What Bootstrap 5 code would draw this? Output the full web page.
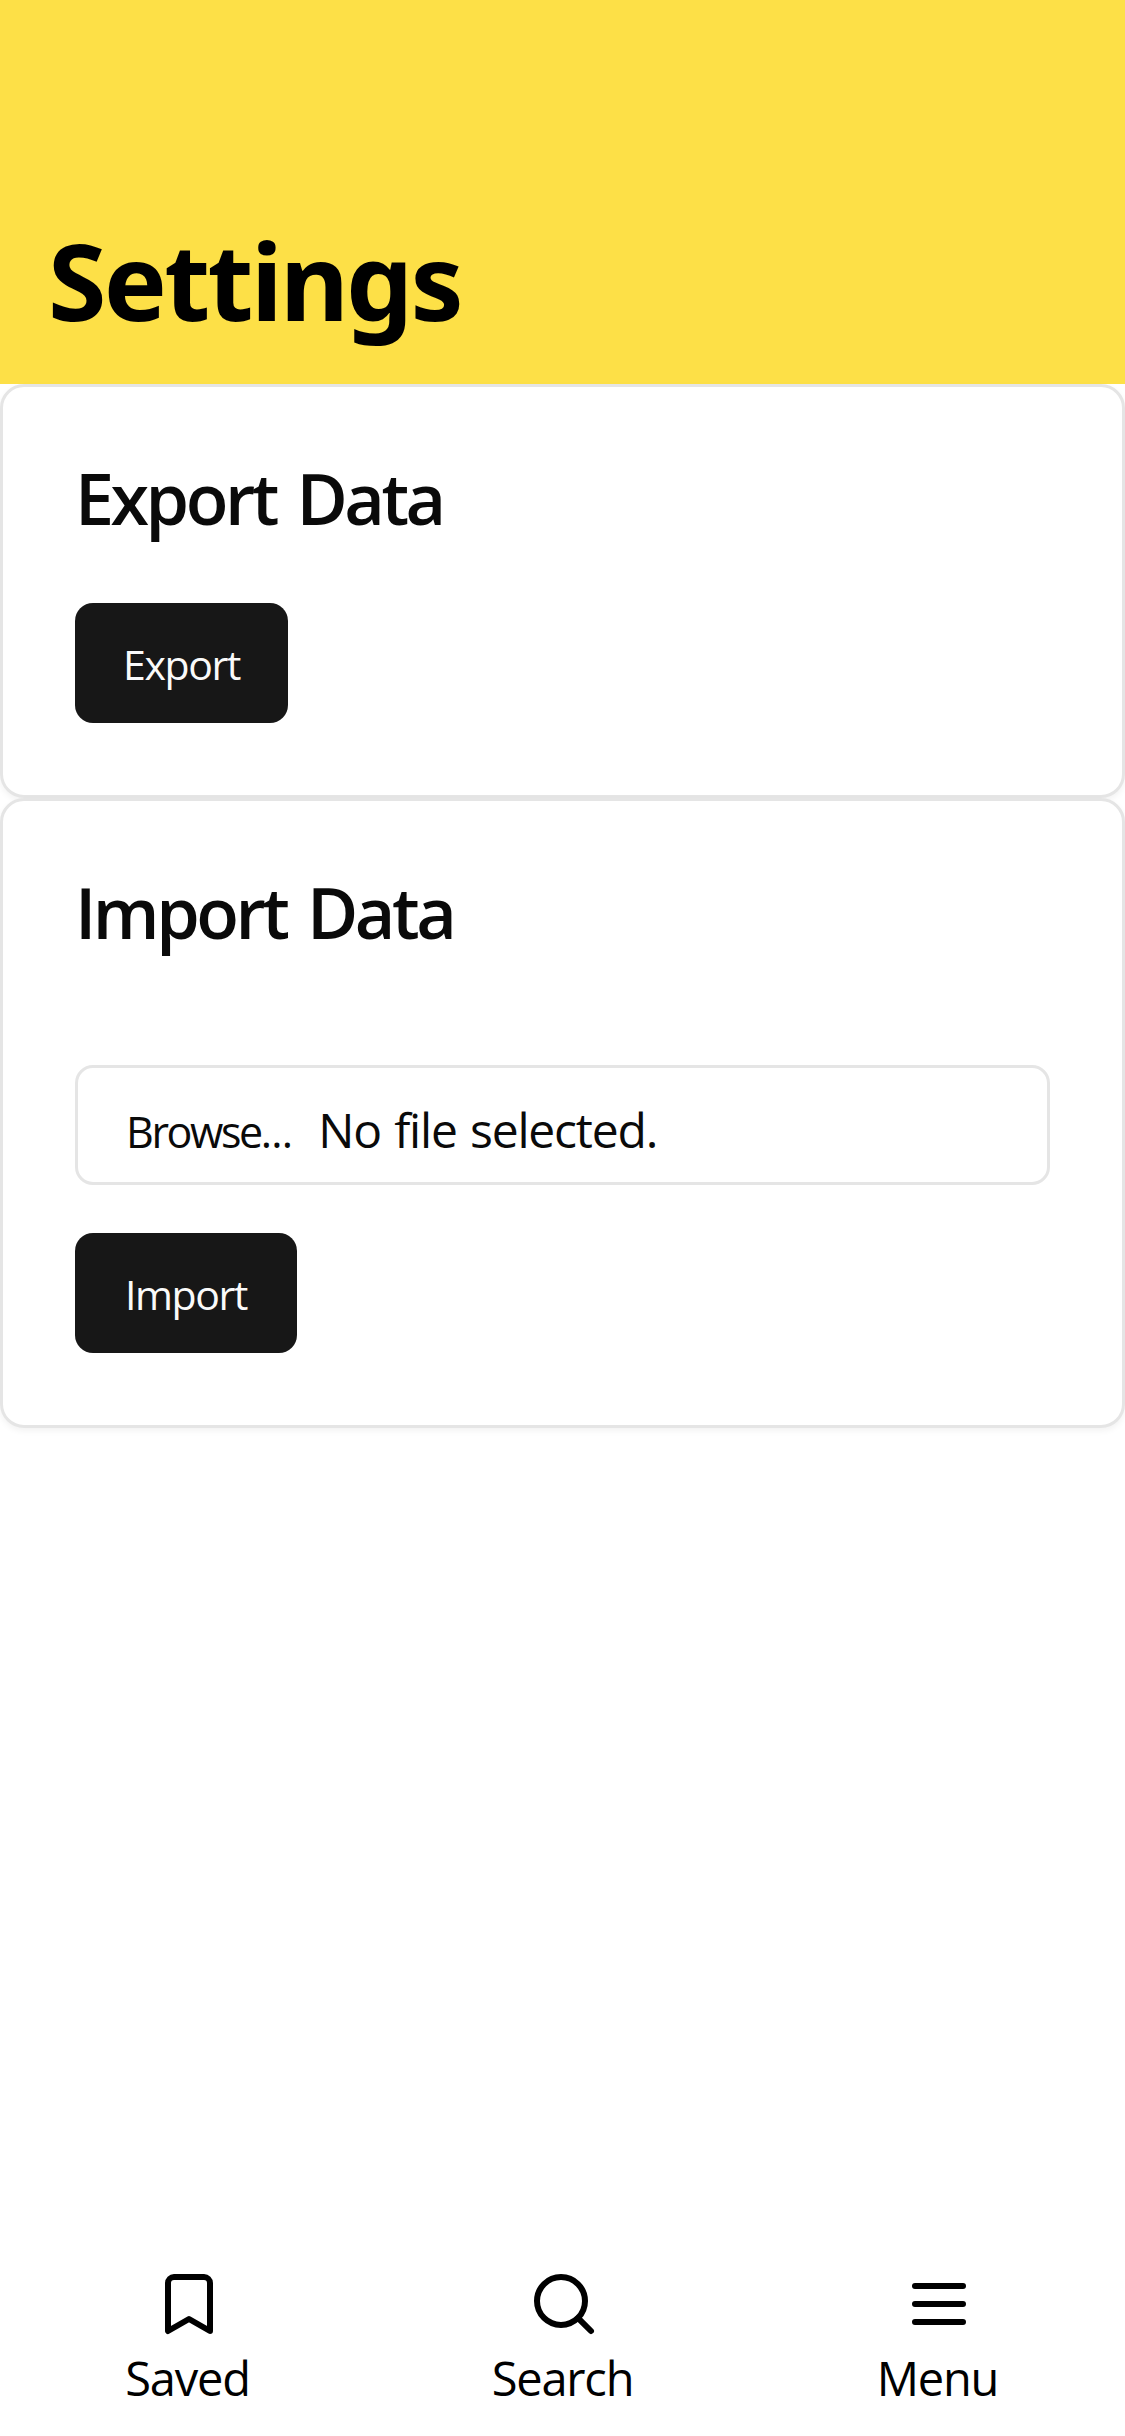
<!DOCTYPE html>
<html lang="en">
<head>
<meta charset="utf-8">
<meta name="viewport" content="width=device-width, initial-scale=1">
<title>Settings</title>
<link href="https://cdn.jsdelivr.net/npm/bootstrap@5.3.0/dist/css/bootstrap.min.css" rel="stylesheet">
<style>
  body { font-family: "Open Sans", "Noto Sans", sans-serif; color: #0a0a0a; background: #fff; }
  .page-head { background: #fde047; height: 384px; padding: 220px 48px 0; }
  .page-head h1 { font-family: "Noto Sans", sans-serif; font-size: 106px; line-height: 120px; color: #000; letter-spacing: -2.7px; }
  .panel { --bs-card-border-color: #e5e5e5; --bs-card-border-width: 3px; --bs-card-border-radius: 24px; --bs-card-inner-border-radius: 21px; color: #0a0a0a; box-shadow: 0 3px 6px rgba(0,0,0,.05); }
  .panel .card-body { padding: 72px; }
  .panel h2 { font-size: 70px; line-height: 79px; font-weight: 600; letter-spacing: -3.5px; word-spacing: 6px; margin-bottom: 65px; }
  .panel h2.before-field { margin-bottom: 113px; }
  .action { --bs-btn-bg: #171717; --bs-btn-color: #fafafa; --bs-btn-border-width: 0; --bs-btn-border-radius: 18px; --bs-btn-font-size: 41px; height: 120px; line-height: 122px; padding: 0 48px; letter-spacing: -1.4px; }
  .export-btn { width: 213px; }
  .import-btn { width: 222px; }
  .file-field { height: 120px; border: 3px solid #e5e5e5; border-radius: 18px; padding: 32px 48px 0; margin-bottom: 48px; }
  .file-pick { font-size: 43px; letter-spacing: -2.4px; line-height: 60px; }
  .file-dots { letter-spacing: -.8px; }
  .file-name { font-size: 48px; letter-spacing: -1.2px; word-spacing: 2px; line-height: 60px; margin-left: 26px; }
  .tabbar { padding-bottom: 22px; background: #fff; }
  .tabbar a { color: #000; font-size: 47px; line-height: 72px; letter-spacing: -1.2px; }
  .tabbar svg { width: 72px; height: 72px; margin: 0 0 2px 3px; }
</style>
</head>
<body>
<div class="min-vh-100 d-flex flex-column">
  <header class="page-head"><h1 class="fw-bold m-0"><span>Settings</span></h1></header>
  <main class="flex-grow-1">
    <section class="card panel">
      <div class="card-body">
        <h2><span>Export Data</span></h2>
        <button type="button" class="btn btn-dark action export-btn d-flex justify-content-center"><span>Export</span></button>
      </div>
    </section>
    <section class="card panel">
      <div class="card-body">
        <h2 class="before-field"><span>Import Data</span></h2>
        <label class="file-field d-flex align-items-baseline">
          <span class="file-pick">Browse<span class="file-dots">...</span></span><span class="file-name">No file selected.</span>
        </label>
        <button type="button" class="btn btn-dark action import-btn d-flex justify-content-center"><span>Import</span></button>
      </div>
    </section>
  </main>
  <nav class="tabbar row g-0 text-center">
    <a href="#" class="col d-flex flex-column align-items-center text-decoration-none">
      <svg viewBox="0 0 24 24" fill="none" stroke="currentColor" stroke-width="2" stroke-linecap="round" stroke-linejoin="round"><path d="m19 21-7-4-7 4V5a2 2 0 0 1 2-2h10a2 2 0 0 1 2 2z"/></svg>
      <span>Saved</span>
    </a>
    <a href="#" class="col d-flex flex-column align-items-center text-decoration-none">
      <svg viewBox="0 0 24 24" fill="none" stroke="currentColor" stroke-width="2" stroke-linecap="round" stroke-linejoin="round"><circle cx="11" cy="11" r="8"/><path d="m21 21-4.3-4.3"/></svg>
      <span>Search</span>
    </a>
    <a href="#" class="col d-flex flex-column align-items-center text-decoration-none">
      <svg viewBox="0 0 24 24" fill="none" stroke="currentColor" stroke-width="2" stroke-linecap="round" stroke-linejoin="round"><path d="M4 6h16M4 12h16M4 18h16"/></svg>
      <span>Menu</span>
    </a>
  </nav>
</div>
<script src="https://cdn.jsdelivr.net/npm/bootstrap@5.3.0/dist/js/bootstrap.bundle.min.js"></script>
</body>
</html>
